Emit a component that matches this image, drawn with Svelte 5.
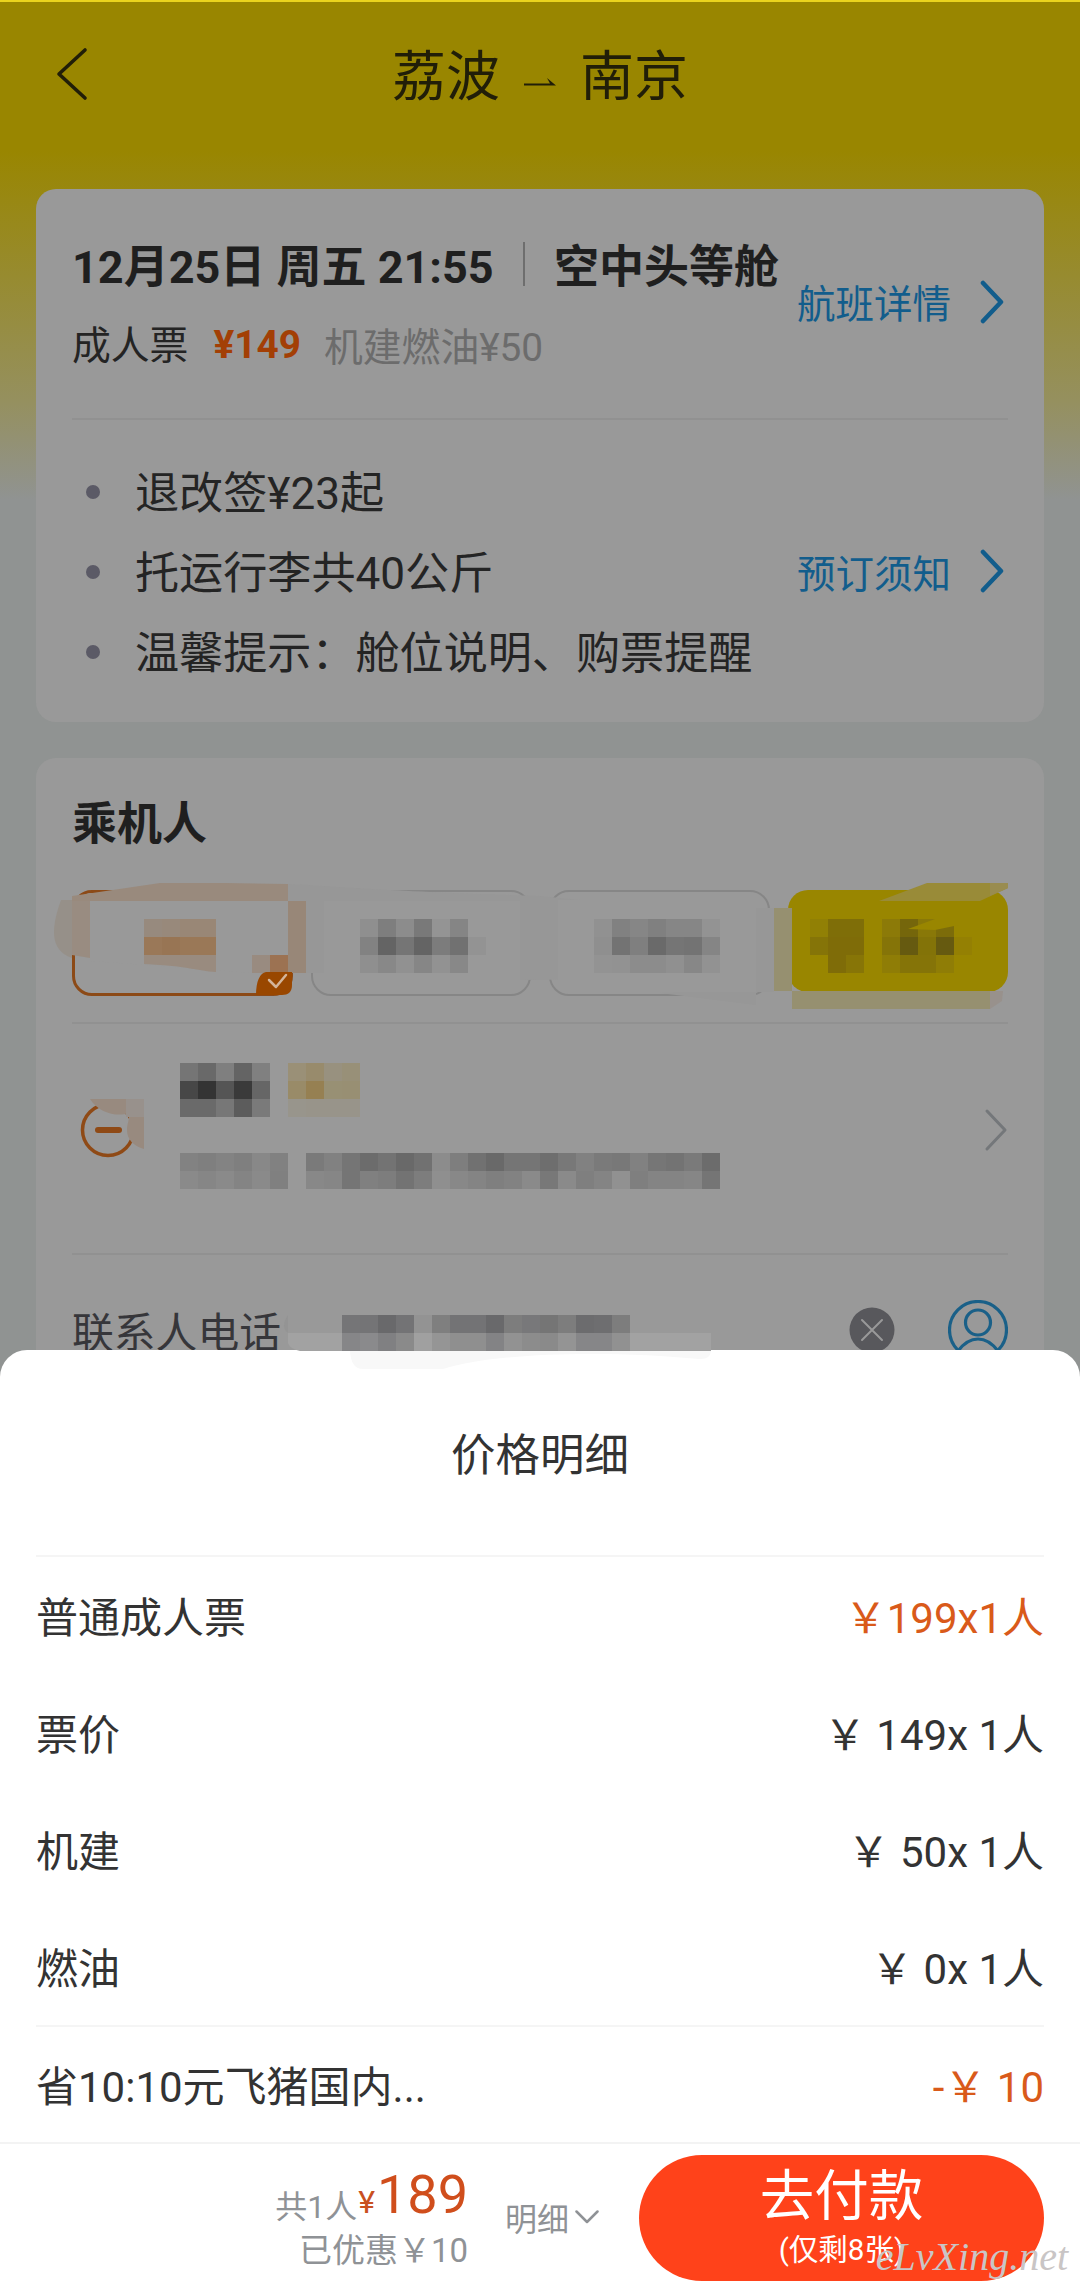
<script>
  const notes = ['退改签¥23起', '托运行李共40公斤', '温馨提示：舱位说明、购票提醒'];
  const prices = [
    { label: '普通成人票', value: '￥199x1人', hot: true },
    { label: '票价', value: '￥ 149x 1人' },
    { label: '机建', value: '￥ 50x 1人' },
    { label: '燃油', value: '￥ 0x 1人' }
  ];

  const CELL = 18;
  // Each strip is one row of censoring cells: start x, y, and the shades ('' leaves a gap).
  const expand = (strips) =>
    strips.flatMap(([x, y, shades]) =>
      shades.split(',').map((c, i) => ({ x: x + i * CELL, y, c })).filter((d) => d.c)
    );

  const chipCells = expand([
    [144, 919, '#978a7e,#98897b,#998776,#998776'],
    [144, 937, '#9a7858,#987554,#9a7857,#9a7857'],
    [252, 955, '#998b80,#9c7252'],
    [360, 919, '#8f8f8f,#7e7e7e,#8c8c8c,#797979,#949494,#858585'],
    [360, 937, '#828282,#646464,#757575,#646464,#7c7c7c,#717171,#939393'],
    [360, 955, '#8f8f8f,#888888,#919191,#868686,#929292,#888888'],
    [594, 919, '#919191,#818181,#868686,#808080,#868686,#868686,#939393'],
    [594, 937, '#8f8f8f,#737373,#7f7f7f,#6a6a6a,#757575,#737373,#858585'],
    [594, 955, '#939393,#929292,#8c8c8c,#8c8c8c,#909090,#878787,#929292'],
    [810, 919, '#918005,#7f6e08,#7f6e08,,#8c7a08,#75660b,#897808,#7c6c0a'],
    [810, 937, '#857408,#7f6c08,#7f6c08,,#857408,#665a10,#837308,#665a10,#948003'],
    [828, 955, '#7f6c08,#877507,,#8f7d06,#857408,#857408,#8f7d06']
  ]);

  const personCells = expand([
    [180, 1063, '#757575,#696969,#7f7f7f,#646464,#808080,,#9a9077,#988b6c,#98917f,#989078'],
    [180, 1081, '#474747,#343434,#555555,#3a3a3a,#666666,,#998b68,#968052,#989074,#988f73'],
    [180, 1099, '#6a6a6a,#6a6a6a,#777777,#5c5c5c,#7a7a7a,,#98958c,#98948a,#98948a,#98948a'],
    [180, 1153, '#828282,#7f7f7f,#838383,#7f7f7f,#888888,#818181,,#7a7a7a,#818181,#757575,#6c6c6c,#737373,#696969,#717171,#8c8c8c,#7e7e7e,#717171,#696969,#757575,#757575,#6e6e6e,#787878,#818181,#7a7a7a,#787878,#818181,#767676,#737373,#7a7a7a,#6c6c6c'],
    [180, 1171, '#8a8a8a,#868686,#8a8a8a,#848484,#8a8a8a,#808080,,#888888,#868686,#757575,#808080,#7d7d7d,#737373,#7d7d7d,#8f8f8f,#888888,#848484,#7f7f7f,#828282,#8a8a8a,#787878,#8a8a8a,#7f7f7f,#848484,#919191,#7f7f7f,#848484,#848484,#868686,#757575']
  ]);

  const phoneCells = expand([
    [342, 1315, '#757577,#747476,#69696b,#737375,#939393,#7f7f7f,#737375,#737375,#69696b,#7d7d7d,#78787a,#757575,#7d7d7d,#6c6c6e,#6e6e70,#7d7d7d'],
    [342, 1333, '#868688,#8a8a8c,#808082,#8a8a8a,#a0a0a0,#959595,#8f8f8f,#8f8f8f,#838385,#929292,#8c8c8c,#8a8a8a,#949494,#868688,#868688,#919191']
  ]);
</script>

{#snippet chevron(cls)}
  <svg class={cls} width="24" height="44" viewBox="0 0 24 44"><path d="M3 3 21 22 3 41" /></svg>
{/snippet}

<div class="screen">
  <header>
    <svg class="back" width="34" height="56" viewBox="0 0 34 56"><path d="M31 3 5 27 31 51" /></svg>
    <h1>
      <span>荔波</span>
      <svg width="32" height="12" viewBox="0 0 32 12"><path d="M0 7.600h32L23 0l3 5.600H0z" /></svg>
      <span>南京</span>
    </h1>
  </header>

  <section class="card flight">
    <div class="summary">
      <div class="when">
        <b class="date">12月25日 周五 21:55</b><i></i><b>空中头等舱</b>
      </div>
      <div class="fare">
        <span>成人票</span><b>¥149</b><span class="tax">机建燃油¥50</span>
      </div>
      <a class="link detail" href="#flight">航班详情 {@render chevron('blue')}</a>
    </div>
    <div class="rules">
      <ul>
        {#each notes as note}<li>{note}</li>{/each}
      </ul>
      <a class="link" href="#notice">预订须知 {@render chevron('blue')}</a>
    </div>
  </section>

  <section class="card people">
    <h2>乘机人</h2>
    <div class="chips">
      <div class="chip on"></div>
      <div class="chip"></div>
      <div class="chip"></div>
      <div class="chip more"></div>
    </div>
    <div class="person">
      <svg width="56" height="58" viewBox="0 0 56 58">
        <circle cx="28" cy="29" r="25.500" /><path d="M18 29h21" />
      </svg>
      {@render chevron('grey')}
    </div>
    <div class="phone">
      <span>联系人电话</span>
      <svg width="46" height="46" viewBox="0 0 46 46">
        <circle cx="23" cy="23" r="22.500" fill="#58585c" />
        <path d="M13 13 33 33M33 13 13 33" stroke="#999" stroke-width="2" />
      </svg>
      <svg class="user" width="60" height="60" viewBox="0 0 60 60">
        <circle cx="30" cy="30" r="28.500" /><circle cx="30" cy="22.500" r="12.500" />
        <path d="M10 51c6-8 12-12 20-12s14 4 20 12" />
      </svg>
    </div>
  </section>

  <svg class="mosaic" width="1080" height="1400" viewBox="0 0 1080 1400">
    <g fill="#979797">
      <path d="M288 884C330 886 400 892 540 896L620 904 620 979 520 980 520 973H306V902H288Z" />
      <path d="M756 908h18v84h-90L660 993l96 12z" />
    </g>
    <path d="M324 901H520V973H324ZM558 900H756V988H558Z" fill="#999" />
    <path d="M61 900h11v58C48 950 52 925 61 900Z" fill="#969089" />
    <path d="M72 896 160 883h64l64 1v17H72Z" fill="#998a7d" />
    <path d="M72 901h18v57l-18-3z" fill="#998c81" />
    <path d="M90 901H288V955H252V973L216 970 90 961Z" fill="#999" />
    <path d="M288 901h18v72h-18z" fill="#988778" />
    <path d="M144 955h72v17c-20-1-25-6-72-8z" fill="#998b7f" />
    <path d="M774 908h18v83h-18zM792 991h198v18H792z" fill="#969070" />
    <path d="M990 991h13l-1 10-12 8z" fill="#98918c" />
    <path d="M879 901 927 883h81v5l-28 13z" fill="#998b38" />
    <path d="M990 883h18v5l-18 8z" fill="#998c50" />
    {#each chipCells as d}<rect x={d.x} y={d.y} width="18" height="18" fill={d.c} />{/each}
    <path d="M908 929 935 919h24v6l-24 5z" fill="#998600" />
    <path d="M256 995c0-14 4-22 10-23h26v13c0 7-4 10-10 10z" fill="#994700" />
    <path d="m269 980 7 7 10-12" fill="none" stroke="#d3b59b" stroke-width="2.500" />
    <path d="M90 1099h54v50c-10-3-17-9-17-19 0-8 4-13 1-17-9 4-29 1-38-14z" fill="#988a7f" />
    <path d="M126 1099h18v18h-18z" fill="#98918c" />
    {#each personCells as d}<rect x={d.x} y={d.y} width="18" height="18" fill={d.c} />{/each}
  </svg>

  <div class="sheet">
    <h3>价格明细</h3>
    <dl>
      {#each prices as p}
        <div class="row"><dt>{p.label}</dt><dd class:hot={p.hot}>{p.value}</dd></div>
      {/each}
      <div class="row saving"><dt>省10:10元飞猪国内...</dt><dd class="hot">-￥ 10</dd></div>
    </dl>
    <footer>
      <div class="total">
        <div class="sum"><span>共1人</span><em>¥</em><strong>189</strong></div>
        <div class="off">已优惠￥10</div>
      </div>
      <div class="more-info">
        明细<svg width="24" height="14" viewBox="0 0 24 14"><path d="M1.500 1.500 12 12 22.500 1.500" /></svg>
      </div>
      <button><span>去付款</span><small>(仅剩8张)</small></button>
    </footer>
  </div>

  <svg class="mosaic" width="1080" height="1400" viewBox="0 0 1080 1400">
    <path d="M288 1315q-8 12 0 18z" fill="#949494" />
    <path d="M288 1333H711v18H300q-10-2-12-8z" fill="#a2a2a2" />
    <path d="M350 1351H711q-1 9-12 8c-80-8-200-8-256 10h-80q-12 0-13-18z" fill="#f8f8f8" />
    {#each phoneCells as d}<rect x={d.x} y={d.y} width="18" height="18" fill={d.c} />{/each}
  </svg>
  <div class="watermark">eLvXing.net</div>
</div>

<style>
  :global(body) { margin: 0; }
  * { box-sizing: border-box; }
  h1, h2, h3, ul, dl, dd { margin: 0; padding: 0; font-weight: 400; }
  svg { display: block; fill: none; stroke-linecap: round; stroke-linejoin: round; flex: none; }

  .screen {
    position: relative;
    width: 1080px;
    height: 2293px;
    overflow: hidden;
    border-top: 2px solid #ead31e;
    font-family: Roboto, 'Noto Sans CJK SC', sans-serif;
    background: linear-gradient(#998600 148px, #95905f 400px, #909392 498px);
    white-space: nowrap;
  }

  header { display: flex; align-items: center; height: 187px; padding: 0 54px 42px; }
  .back { stroke: #211e08; stroke-width: 3.6; }
  h1 {
    flex: 1;
    display: flex;
    align-items: center;
    justify-content: center;
    gap: 24px;
    padding: 6px 34px 0 0;
    font-size: 54px;
    line-height: 80px;
    color: #211e08;
  }
  h1 svg { fill: #211e08; margin-top: 12px; }

  .card { margin: 0 36px; padding: 0 36px; border-radius: 20px; background: #999; color: #242424; }
  .flight { height: 533px; }
  .summary {
    display: grid;
    grid-template: 78px 78px / 1fr auto;
    height: 231px;
    padding-top: 35px;
    border-bottom: 2px solid #919191;
  }
  .when, .fare { display: flex; align-items: center; }
  .when { font-size: 45px; color: #1f1f1f; }
  .when i { width: 2.5px; height: 44px; margin: 2px 29px 0 29px; background: #6e6e6e; }
  .fare { font-size: 38.8px; padding-top: 2px; }
  .fare b { margin: 0 23px 0 25px; padding-top: 4px; color: #a33f05; }
  .tax { color: #6c6c6c; padding-top: 4px; }
  .detail { grid-area: 1 / 2 / 3 / 3; padding-bottom: 3px; }
  .detail :global(svg) { margin-top: 3px; }
  .link { display: flex; align-items: center; gap: 29px; padding-right: 4px; font-size: 38.5px; color: #125d8c; text-decoration: none; }
  .blue { stroke: #125d8c; stroke-width: 4.5; }
  .rules { display: flex; align-items: center; justify-content: space-between; height: 302px; }
  ul { list-style: none; }
  li { display: flex; align-items: center; height: 80px; padding-bottom: 3px; font-size: 44.1px; }
  li::before { content: ''; width: 14px; height: 14px; margin: 5px 35px 0 14px; border-radius: 50%; background: #5b5a66; }

  .people { height: 640px; margin-top: 36px; }
  h2 { height: 132px; padding-top: 36px; font-size: 45px; line-height: 62px; font-weight: 700; color: #1f1f1f; }
  .chips { display: grid; grid-template-columns: repeat(4, 1fr); gap: 18px; height: 134px; padding-bottom: 28px; border-bottom: 2px solid #919191; }
  .chip { height: 106px; border: 2.5px solid #868686; border-radius: 20px; }
  .on { border: 3px solid #8c4a17; }
  .more { height: 102px; border: 0; background: #998600; }
  .person { display: flex; align-items: center; justify-content: space-between; height: 231px; padding: 0 0 18px 8px; border-bottom: 2px solid #919191; }
  .person svg { stroke: #8f4a16; stroke-width: 3.5; }
  .person path { stroke-width: 6; }
  .person .grey { stroke: #74777a; }
  .person .grey path { stroke-width: 3; }
  .phone { display: flex; align-items: center; height: 149px; font-size: 41.8px; color: #36363a; }
  .phone span { flex: 1; }
  .user { margin-left: 53px; stroke: #1a6088; stroke-width: 3.2; }

  .mosaic { position: absolute; left: 0; top: -2px; }

  .sheet { position: absolute; left: 0; right: 0; top: 1348px; bottom: 0; border-radius: 27px 27px 0 0; background: #fff; color: #333; }
  h3 { height: 207px; margin: 0 36px; border-bottom: 2px solid #f5f5f5; text-align: center; font-size: 44.5px; line-height: 212px; }
  dl { padding: 0 36px; }
  .row { display: flex; align-items: center; justify-content: space-between; height: 117px; padding-bottom: 3px; font-size: 42px; }
  .saving { border-top: 2px solid #f5f5f5; height: 117px; padding-bottom: 3px; }
  .hot { color: #d95a1a; }
  footer { display: flex; align-items: flex-start; height: 153px; padding: 11px 36px 0 0; border-top: 2px solid #f3f3f3; color: #8f9296; font-size: 32px; }
  .total { width: 468px; padding-top: 10px; text-align: right; }
  .sum { display: flex; align-items: baseline; justify-content: flex-end; height: 64px; line-height: 60px; }
  .sum span { position: relative; top: 5px; }
  .sum em { font-style: normal; color: #c9501f; margin: 0 2px 0 1px; }
  .sum strong { font-size: 54px; font-weight: 400; color: #d04e1c; }
  .off { font-size: 33px; line-height: 44px; }
  .more-info { display: flex; align-items: center; gap: 6px; height: 124px; margin-left: 37px; }
  .more-info svg { stroke: #8f9296; stroke-width: 2.5; }
  button {
    display: flex;
    flex-direction: column;
    align-items: center;
    justify-content: center;
    width: 405px;
    height: 126px;
    margin-left: auto;
    padding: 2px 0 0;
    border: 0;
    border-radius: 63px;
    background: #ff421a;
    color: #fff;
    font-family: inherit;
  }
  button span { font-size: 54.5px; line-height: 62px; }
  button small { font-size: 29.5px; line-height: 46px; }
  .watermark { position: absolute; right: 12px; bottom: 13px; font: italic 40px/46px 'Liberation Serif', serif; color: #c9c5c5; }
</style>
